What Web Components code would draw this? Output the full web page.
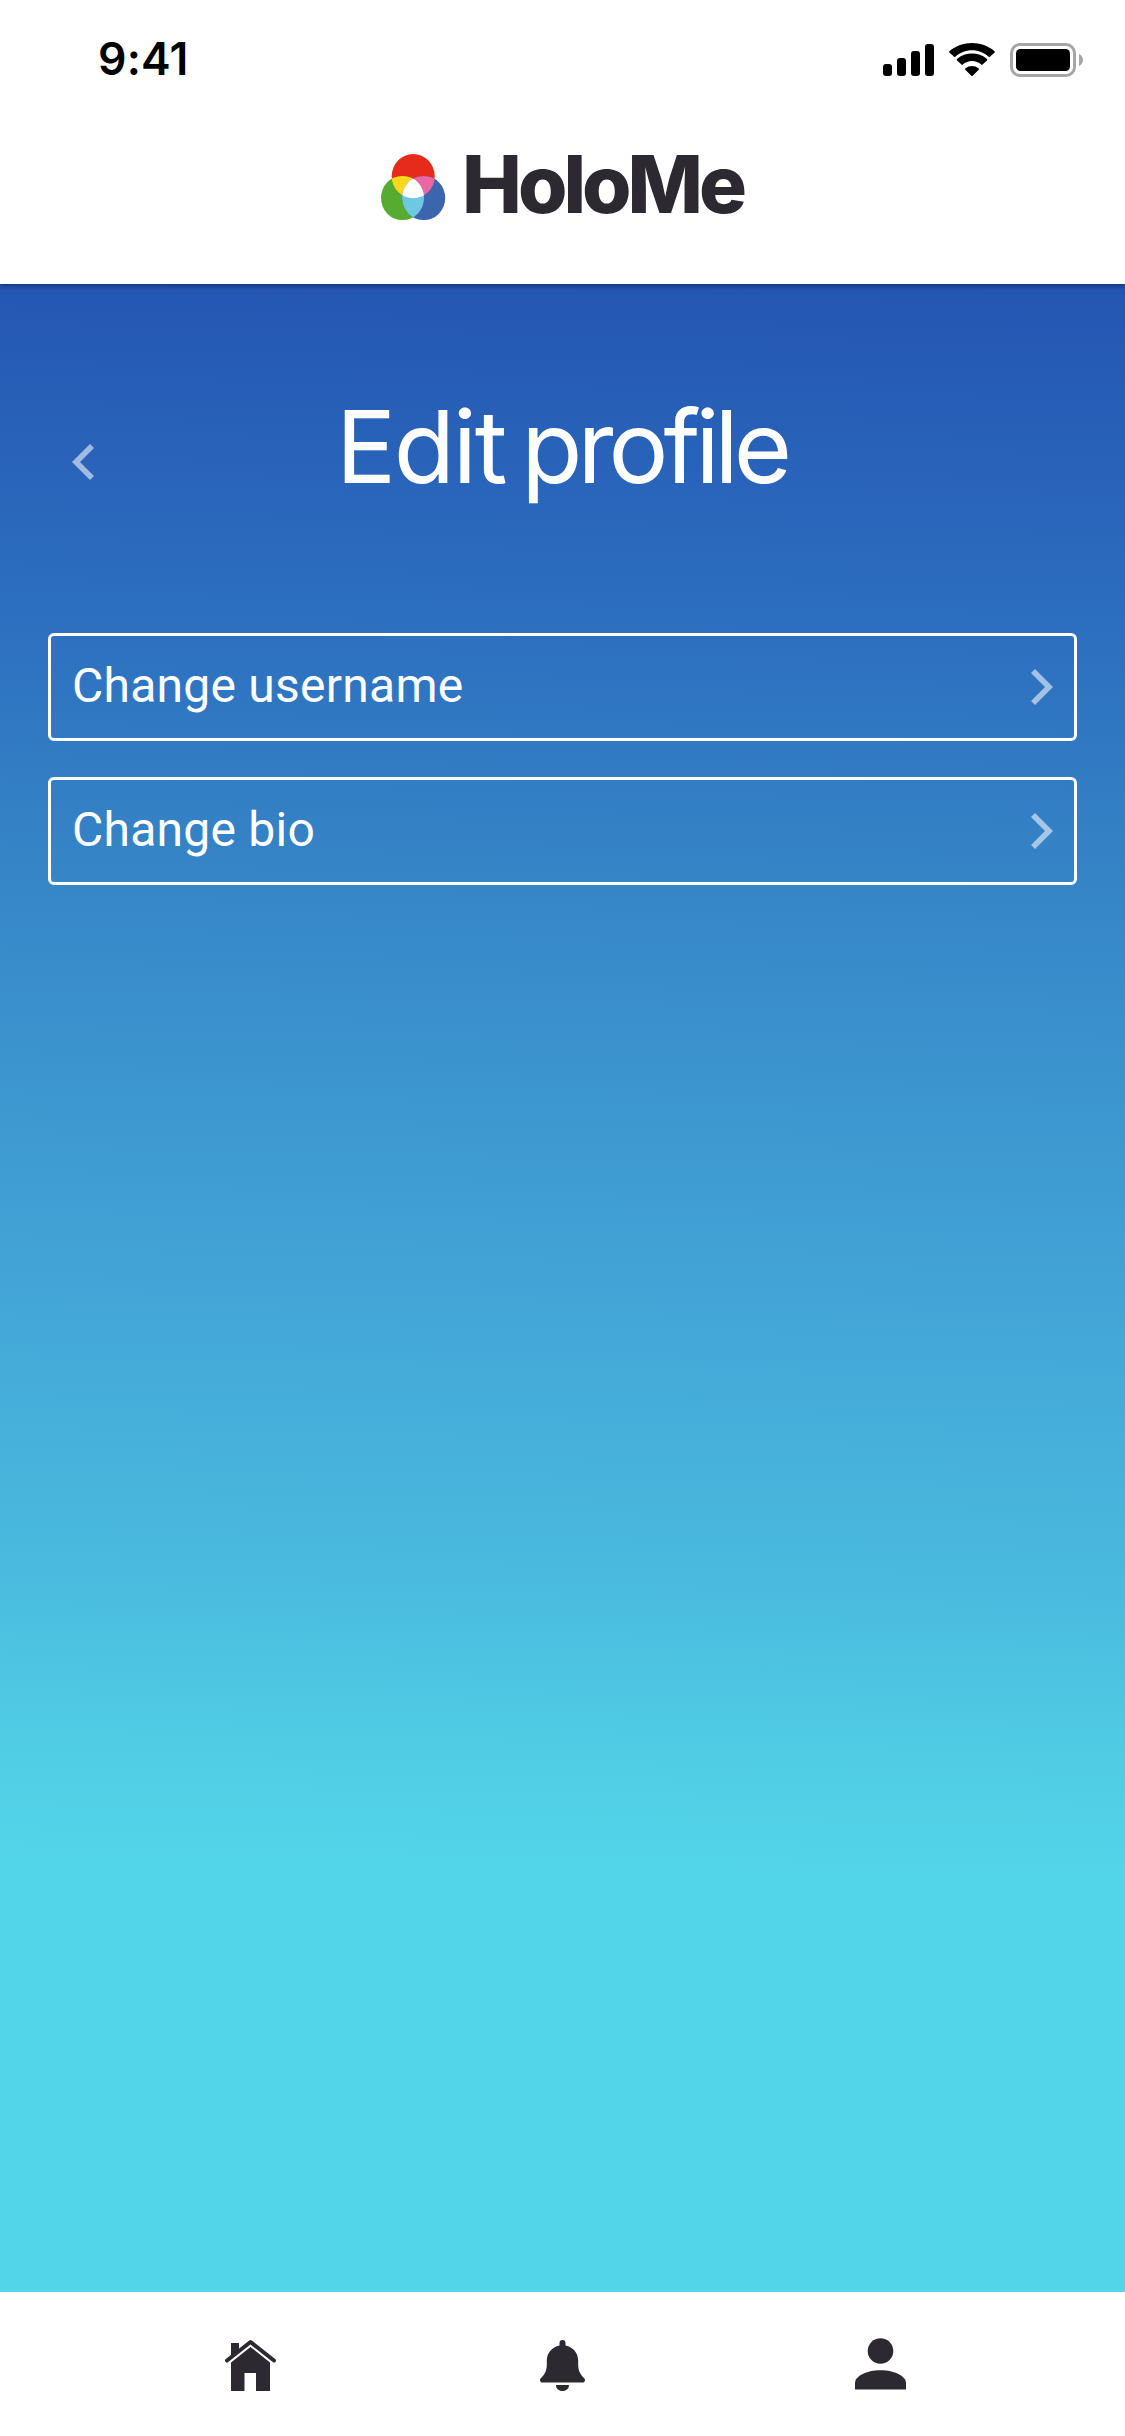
<!DOCTYPE html>
<html lang="en">
<head>
<meta charset="utf-8">
<title>HoloMe – Edit profile</title>
<style>
html,body{margin:0;padding:0}
body{width:1125px;height:2436px;overflow:hidden;font-family:Inter,"Liberation Sans",sans-serif}
</style>
</head>
<body>
<holo-screen></holo-screen>
<script>
const define = (name, markup) => customElements.define(name, class extends HTMLElement {
  constructor() {
    super();
    this.attachShadow({ mode: 'open' }).innerHTML = markup;
  }
});

define('status-bar', `
<style>
:host{display:flex;justify-content:space-between;height:118px;padding:0 42px 0 98px;box-sizing:border-box}
.time{font:600 44.5px/53px Inter,sans-serif;letter-spacing:.2px;color:#000;padding-top:33px}
.icons{display:flex;gap:15px;padding-top:43px}
svg{display:block}
</style>
<div class="time">9:41</div>
<div class="icons">
<svg width="51" height="34" viewBox="883 43 51 34"><rect x="883" y="64" width="9" height="12" rx="3"/><rect x="897" y="58" width="9" height="18" rx="3"/><rect x="911" y="51" width="9" height="25" rx="3"/><rect x="925" y="44" width="9" height="32" rx="3"/></svg>
<svg width="46" height="34" viewBox="949 43 46 34"><path d="M972 50.2c6.300 0 12.200 2.400 16.700 6.600.4.300.9.300 1.200 0l4.700-4.200c.4-.4.400-.9 0-1.300-12.500-11-32.700-11-45.200 0-.4.400-.4.900 0 1.300l4.700 4.200c.3.300.8.300 1.200 0 4.500-4.200 10.400-6.600 16.700-6.600z"/><path d="M972 61.100c3.400 0 6.700 1.300 9.200 3.500.4.400.9.400 1.300 0l4.500-4.200c.4-.4.400-1 0-1.400-8.400-7.300-21.600-7.300-30 0-.4.400-.4 1 0 1.400l4.500 4.200c.4.400.9.400 1.300 0 2.500-2.200 5.800-3.500 9.200-3.500z"/><path d="M978.700 69.700c.4-.4.400-1 0-1.300-3.800-3.300-9.600-3.300-13.400 0-.4.300-.4.900 0 1.300l6 6c.4.400 1 .4 1.400 0z"/></svg>
<svg width="73" height="34" viewBox="1010 43 73 34"><rect x="1011.500" y="44.500" width="63" height="31" rx="8.500" fill="none" stroke="#a6a6a6" stroke-width="3"/><rect x="1016" y="49" width="54" height="22" rx="4.500"/><path fill="#a6a6a6" d="M1079 54c2.600 1.100 4 3.500 4 6s-1.400 4.900-4 6z"/></svg>
</div>`);

define('holo-logo', `
<style>
:host{display:flex;align-items:flex-start;height:84px;padding-left:381px}
svg{display:block;margin-top:36px}
.word{font:800 80px/96px Inter,sans-serif;letter-spacing:-4px;color:#2c2a30;margin:18px 0 0 16px}
</style>
<svg width="65" height="67" viewBox="381 154 65 67">
<defs><clipPath id="r"><ellipse cx="413.200" cy="176.200" rx="21.500" ry="22.100"/></clipPath><clipPath id="g"><ellipse cx="402.500" cy="198" rx="21.500" ry="22.100"/></clipPath></defs>
<ellipse cx="413.200" cy="176.200" rx="21.500" ry="22.100" fill="#e62b1c"/>
<ellipse cx="402.500" cy="198" rx="21.500" ry="22.100" fill="#56ab30"/>
<ellipse cx="423.700" cy="198" rx="21.500" ry="22.100" fill="#3b65ad"/>
<g clip-path="url(#r)"><ellipse cx="402.500" cy="198" rx="21.500" ry="22.100" fill="#fcd81c"/><ellipse cx="423.700" cy="198" rx="21.500" ry="22.100" fill="#eb66a3"/></g>
<g clip-path="url(#g)"><ellipse cx="423.700" cy="198" rx="21.500" ry="22.100" fill="#6fc8e2"/><g clip-path="url(#r)"><ellipse cx="423.700" cy="198" rx="21.500" ry="22.100" fill="#fff"/></g></g>
</svg>
<div class="word">HoloMe</div>`);

define('app-header', `
<style>
:host{display:block;height:284px;background:#fff;box-shadow:0 1px 6px rgba(0,0,0,.5);position:relative;z-index:1;flex:none}
</style>
<status-bar></status-bar><holo-logo></holo-logo>`);

define('page-title', `
<style>
:host{display:flex;height:349px;box-sizing:border-box;padding-left:72px}
svg{display:block;margin-top:160px;flex:none}
h1{margin:102px 0 0 242px;font:400 100px/121px Inter,sans-serif;letter-spacing:-5px;color:#fff;white-space:nowrap}
::slotted(.lead){letter-spacing:-2.300px;margin-right:-7px}
</style>
<svg width="22" height="36" viewBox="0 0 22 36"><path d="M0 18 18 0l4 4L8 18l14 14-4 4z" fill="#fff" fill-opacity=".56"/></svg>
<h1><slot></slot></h1>`);

define('menu-row', `
<style>
:host{display:flex;justify-content:space-between;align-items:center;height:108px;box-sizing:border-box;border:3px solid #fff;border-radius:6px;padding:0 21px 0 21px}
span{font:400 48px/56px Roboto,sans-serif;letter-spacing:.25px;color:#fff;margin-top:-2px}
svg{display:block}
</style>
<span><slot></slot></span>
<svg width="22" height="36" viewBox="0 0 22 36"><path d="M22 18 4 0 0 4l14 14L0 32l4 4z" fill="#fff" fill-opacity=".56"/></svg>`);

define('menu-list', `
<style>:host{display:flex;flex-direction:column;gap:36px;padding:0 48px}</style><slot></slot>`);

define('tab-bar', `
<style>
:host{display:flex;height:144px;background:#fff;padding:0 0 0 225px;box-sizing:border-box;flex:none}
svg{display:block;margin-top:46px;fill:#2c2a30}
svg+svg{margin-left:264px}
svg+svg+svg{margin-left:270px}
</style>
<svg width="51" height="53" viewBox="225 2338 51 53"><path d="M227 2360.500 250.500 2342 274 2360.500" fill="none" stroke="#2c2a30" stroke-width="4" stroke-linecap="round" stroke-linejoin="round"/><path d="M231 2343h8v6.500l-8 6.300zM250.500 2347l19.500 15.500V2391h-14v-18h-11.500v18H231v-28.500z"/></svg>
<svg width="45" height="53" viewBox="540 2338 45 53"><path d="M562.500 2340c1.900 0 3 1.300 3 3v2.400c7.600 1.500 12.700 7.600 12.700 15.200v3.900c0 5.500 1.500 9.300 5.800 13.500 1 1 1.200 2 .8 3-.4 1-1.200 1.500-2.300 1.500h-40c-1.100 0-1.900-.5-2.300-1.500-.4-1-.2-2 .8-3 4.300-4.200 5.800-8 5.800-13.500v-3.900c0-7.600 5.100-13.700 12.700-15.200v-2.400c0-1.700 1.100-3 3-3zM556 2385h13c0 3.500-2.700 6-6.500 6s-6.500-2.500-6.500-6z"/></svg>
<svg width="51" height="53" viewBox="855 2338 51 53"><circle cx="880.500" cy="2351" r="12.800"/><path d="M855 2389.500v-6.500c0-6.500 11-12.700 25.500-12.700s25.500 6.200 25.500 12.700v6.500z"/></svg>`);

define('holo-screen', `
<style>
:host{display:flex;flex-direction:column;width:1125px;height:2436px}
main{flex:1;background:linear-gradient(181.200deg,#2455b2 0,#2d70c0 18%,#3584c6 29%,#42a3d6 49%,#4abade 64%,#50cde5 73%,#53d5e9 79%,#53d5e9 100%)}
</style>
<app-header></app-header>
<main>
<page-title><span class="lead">Edit</span> profile</page-title>
<menu-list><menu-row>Change username</menu-row><menu-row>Change bio</menu-row></menu-list>
</main>
<tab-bar></tab-bar>`);
</script>
</body>
</html>
